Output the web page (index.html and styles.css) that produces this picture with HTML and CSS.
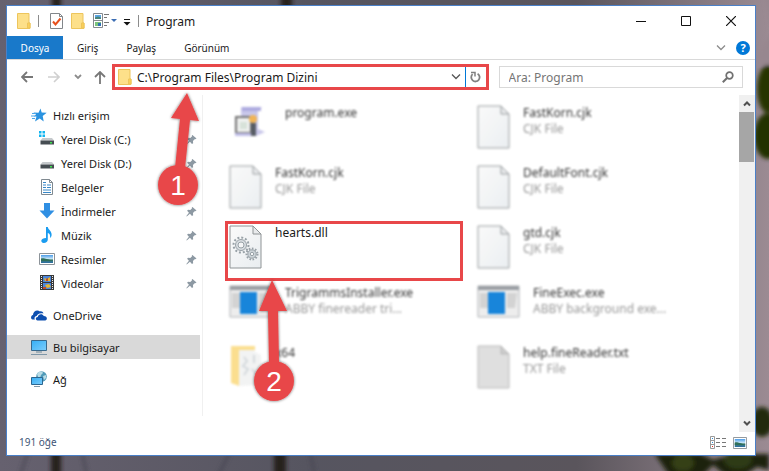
FILE: index.html
```html
<!DOCTYPE html>
<html lang="tr">
<head>
    <meta charset="UTF-8">
    <meta name="viewport" content="width=device-width, initial-scale=1.0">
    <title>Program</title>
    <link rel="stylesheet" href="styles.css">
</head>
<body>

    <!-- Shared icons -->
    <svg class="sprite" aria-hidden="true">
        <defs>
            <linearGradient id="paper" x1="0" y1="0" x2="1" y2="1">
                <stop offset="0" stop-color="#fafafa"/>
                <stop offset="1" stop-color="#e9edf0"/>
            </linearGradient>
            <linearGradient id="screen" x1="0" y1="0" x2="1" y2="1">
                <stop offset="0" stop-color="#35aef5"/>
                <stop offset="1" stop-color="#7ccdfb"/>
            </linearGradient>
            <linearGradient id="sky" x1="0" y1="0" x2="0" y2="1">
                <stop offset="0" stop-color="#4a9be8"/>
                <stop offset="0.5" stop-color="#d2ecfa"/>
                <stop offset="0.6" stop-color="#3f7d6b"/>
                <stop offset="1" stop-color="#2c6fa8"/>
            </linearGradient>
            <filter id="soft"><feGaussianBlur stdDeviation="2"/></filter>
            <filter id="shadow" x="-30%" y="-30%" width="160%" height="160%"><feDropShadow dx="0" dy="0" stdDeviation="1.5" flood-color="#000" flood-opacity="0.6"/></filter>
        </defs>
        <symbol id="i-folder" viewBox="0 0 14 16">
            <path d="M.5.5h11.500v9.500h1v5.500H.5z" fill="#fde08a" stroke="#edc55c"/>
            <path d="M10.500 15V10h2.500v5z" fill="#fbd058" stroke="#edc55c"/>
        </symbol>
        <symbol id="i-pin" viewBox="0 0 12 12">
            <path d="M7 1l4.500 4-1.500.8-.6-.2-1.800 2 .2 2.400-1.300.8-2.200-2.300L.8 11.500.4 11 3.200 7.400 1.200 5.300l1-1.200 2.500.2 1.900-1.800-.3-.8z" fill="#8d99a3"/>
        </symbol>
        <symbol id="i-page" viewBox="0 0 33 44">
            <path d="M1 1h23l8 8v34H1z" fill="url(#paper)" stroke="#8f9496"/>
            <path d="M24 1v8h8z" fill="#e8eaec" stroke="#8f9496"/>
        </symbol>
        <symbol id="i-txt" viewBox="0 0 33 44">
            <path d="M1 1h23l8 8v34H1z" fill="#dcdcdc" stroke="#b4b4b4"/>
            <path d="M24 1v8h8z" fill="#c8c8c8" stroke="#b0b0b0"/>
        </symbol>
        <symbol id="i-app" viewBox="0 0 43 33">
            <path d="M1 1h41v31H1z" fill="#ececec" stroke="#a8acb0"/>
            <path d="M1 1h41v4H1z" fill="#8f9499"/>
            <path d="M3 8h8v15H3zM30 8h10l-2 15h-8z" fill="#cfcfcf"/>
            <path d="M11 7h17v22H11z" fill="#0078d7"/>
        </symbol>
        <symbol id="i-photo" viewBox="0 0 16 12">
            <path d="M.5.5h15v11H.5z" fill="#fff" stroke="#8c9399"/>
            <path d="M2 2h12v8H2z" fill="url(#sky)"/>
            <path d="M2 5.500c3-1 5 .5 12 2V8H2z" fill="#2f6f5a"/>
        </symbol>
    </svg>

    <svg class="wallpaper" viewBox="0 0 769 471" preserveAspectRatio="none" aria-hidden="true">
        <g filter="url(#soft)">
            <path d="M52-5h9v20h-9zM281-5h11v20h-11z" fill="#25221f"/>
            <path d="M51 452h10v24H51zM274 452h12v24h-12z" fill="#25221f"/>
            <path d="M28 452l-8 24M82 452l5 24M310 452l5 24M230 452l-12 24" stroke="#454350" stroke-width="2"/>
            <path d="M754 60c8 6 12 4 18 2V-5h-8c5 16 4 26 8 36z" fill="#97878f"/>
            <path d="M757 88c4 12 10 18 18 20V80z" fill="#2c3a0d"/>
            <ellipse cx="768" cy="89" rx="11" ry="24" fill="#263406"/>
            <ellipse cx="768" cy="136" rx="14" ry="23" fill="#223004"/>
            <ellipse cx="762" cy="422" rx="11" ry="15" fill="#202a0a"/>
            <path d="M655 454h46l12 6 22-6h34v16l-12-3-12 8h-20l-12-10-10 10h-34z" fill="#1d2409"/>
            <ellipse cx="738" cy="460" rx="14" ry="9" fill="#2e3a12"/>
            <ellipse cx="683" cy="463" rx="11" ry="8" fill="#344014"/>
        </g>
    </svg>

    <div class="window">

        <header class="titlebar">
            <svg class="icon-folder" aria-hidden="true"><use href="#i-folder"/></svg>
            <span class="separator"></span>
            <button class="quick" aria-label="Özellikler">
                <svg width="13" height="16" viewBox="0 0 13 16"><path d="M.5.5h9l3 3v12H.5z" fill="#fff" stroke="#82868a"/><path d="M9.500.5v3h3" fill="none" stroke="#82868a"/><path d="M3 8.500l2.500 3 5-6" fill="none" stroke="#e8501c" stroke-width="2"/></svg>
            </button>
            <button class="quick" aria-label="Yeni klasör">
                <svg class="icon-folder"><use href="#i-folder"/></svg>
            </button>
            <button class="quick" aria-label="Görünüm seçenekleri">
                <svg width="24" height="16" viewBox="0 0 24 16"><path d="M.5.500h9v14h-9zM.5 7.500h9" fill="#fff" stroke="#84898e"/><path d="M2 2h6v4H2z" fill="#5aa5e2"/><path d="M2 4.500l3-1 3 1V6H2z" fill="#4a8579"/><path d="M2 9h6v4H2z" fill="#7cc47c"/><path d="M5 10h3v3H5z" fill="#3172b5"/><path d="M11 1.500h5M11 4.500h3M11 9.500h5M11 12.500h3" stroke="#777"/><path d="M18 6h6l-3 3z" fill="#3c6eb4"/></svg>
            </button>
            <button class="quick quick-more" aria-label="Özelleştir">
                <svg width="8" height="8" viewBox="0 0 8 8"><path d="M1 1.500h6" stroke="#111"/><path d="M.5 4h7L4 7.500z" fill="#111"/></svg>
            </button>
            <span class="separator"></span>
            <h1 class="title">Program</h1>
            <div class="window-controls">
                <button aria-label="Simge durumuna küçült"><svg width="10" height="10"><path d="M0 5.500h10" stroke="#111"/></svg></button>
                <button aria-label="Ekranı kapla"><svg width="10" height="10"><path d="M.5.500h9v9h-9z" fill="none" stroke="#111"/></svg></button>
                <button aria-label="Kapat"><svg width="10" height="10"><path d="M0 0l10 10M10 0L0 10" stroke="#111" stroke-width="1.200"/></svg></button>
            </div>
        </header>

        <nav class="ribbon">
            <button class="tab tab-file">Dosya</button>
            <button class="tab">Giriş</button>
            <button class="tab">Paylaş</button>
            <button class="tab">Görünüm</button>
            <div class="ribbon-end">
                <button aria-label="Şeridi genişlet"><svg width="10" height="6"><path d="M1 .5l4 4 4-4" fill="none" stroke="#8c8c8c" stroke-width="1.300"/></svg></button>
                <button class="help" aria-label="Yardım">?</button>
            </div>
        </nav>

        <div class="toolbar">
            <div class="nav-buttons">
                <button aria-label="Geri"><svg width="12" height="12" viewBox="0 0 12 12"><path d="M6 1L1 6l5 5M1 6h11" fill="none" stroke="#777" stroke-width="1.800"/></svg></button>
                <button aria-label="İleri"><svg width="12" height="12" viewBox="0 0 12 12"><path d="M6 1l5 5-5 5M11 6H0" fill="none" stroke="#d0d0d0" stroke-width="1.600"/></svg></button>
                <button class="narrow" aria-label="Son konumlar"><svg width="8" height="6"><path d="M1 1l3 3 3-3" fill="none" stroke="#8c8c8c" stroke-width="1.800"/></svg></button>
                <button class="narrow" aria-label="Yukarı"><svg width="12" height="13" viewBox="0 0 12 13"><path d="M1 6l5-5 5 5M6 1v12" fill="none" stroke="#777" stroke-width="1.800"/></svg></button>
            </div>
            <div class="address">
                <svg class="icon-folder" aria-hidden="true"><use href="#i-folder"/></svg>
                <input type="text" value="C:\Program Files\Program Dizini" aria-label="Adres">
                <button aria-label="Önceki konumlar"><svg width="10" height="6"><path d="M1 .5l4 4 4-4" fill="none" stroke="#555" stroke-width="1.300"/></svg></button>
                <button class="refresh" aria-label="Yenile"><svg width="11" height="12" viewBox="0 0 11 12"><path d="M2.600 3.200A4.200 4.200 0 1 0 7.600 2.700" fill="none" stroke="#808080" stroke-width="1.800"/><path d="M1 1.500h4v4" fill="none" stroke="#808080" stroke-width="1.500"/></svg></button>
            </div>
            <div class="search">
                <input type="search" placeholder="Ara: Program" aria-label="Ara">
                <svg width="12" height="12" viewBox="0 0 12 12" aria-hidden="true"><circle cx="7.500" cy="4.500" r="3.300" fill="none" stroke="#707070" stroke-width="1.700"/><path d="M5 7L.8 11.200" stroke="#707070" stroke-width="2"/></svg>
            </div>
        </div>

        <div class="content">

            <aside class="sidebar">
                <section class="group">
                    <a class="place" href="#">
                        <svg viewBox="0 0 16 16"><path d="M9.500 1.500l1.200 4 5 .2-4 3.300 1 5.500-4-3-4.700 3 1.500-5H3L5 7.500 2.500 5.500l5 .2z" fill="#2b93e0"/><path d="M1 6.500h4M0 9h4M1 11.500h3" stroke="#4aa6ea"/></svg>
                        Hızlı erişim
                    </a>
                    <a class="place child" href="#">
                        <svg viewBox="0 0 16 16"><path d="M0 0h2.500v2.500H0zM3.500 0H6v2.500H3.500zM0 3.500h2.500V6H0zM3.500 3.500H6V6H3.500z" fill="#12b5f0"/><path d="M3.500 7H13l2 2.500H1.500z" fill="#c5c9cc"/><path d="M1.500 9.500H15v4H1.500z" fill="#464d52"/><path d="M11 11h2v1.500h-2z" fill="#3de04f"/></svg>
                        Yerel Disk (C:)<svg class="pin"><use href="#i-pin"/></svg>
                    </a>
                    <a class="place child" href="#">
                        <svg viewBox="0 0 16 16"><path d="M3.500 7H13l2 2.500H1.500z" fill="#c5c9cc"/><path d="M1.500 9.500H15v4H1.500z" fill="#464d52"/><path d="M11 11h2v1.500h-2z" fill="#3de04f"/></svg>
                        Yerel Disk (D:)<svg class="pin"><use href="#i-pin"/></svg>
                    </a>
                    <a class="place child" href="#">
                        <svg viewBox="0 0 16 16"><path d="M2.500.5h8l3 3v12h-11z" fill="#fff" stroke="#7f8990"/><path d="M10.500.5v3h3" fill="none" stroke="#7f8990"/><path d="M4 3.500h3M4 6h3M8 6h4M4 8.500h3M8 8.500h4M4 11h8M4 13.500h8" stroke="#3787c7"/></svg>
                        Belgeler
                    </a>
                    <a class="place child" href="#">
                        <svg viewBox="0 0 16 16"><path d="M5 0h6v7.500h4.500L8 15.500.5 7.500H5z" fill="#2f8fe3"/></svg>
                        İndirmeler<svg class="pin"><use href="#i-pin"/></svg>
                    </a>
                    <a class="place child" href="#">
                        <svg viewBox="0 0 16 16"><path d="M7 0h1.800c.3 3 4.700 4 3.700 9-.4 1-1 1.500-1.500 2 .6-3-.5-4.500-2.200-5v6.500C8.800 14.500 7 16 4.800 16 1 15.500 1.500 11 7 11z" fill="#1a9cf0"/></svg>
                        Müzik<svg class="pin"><use href="#i-pin"/></svg>
                    </a>
                    <a class="place child" href="#">
                        <svg viewBox="0 0 16 12"><use href="#i-photo"/></svg>
                        Resimler<svg class="pin"><use href="#i-pin"/></svg>
                    </a>
                    <a class="place child" href="#">
                        <svg viewBox="0 0 16 16"><path d="M1 0h14v15H1z" fill="#393939"/><path d="M4 1h8v6H4zM4 8h8v6H4z" fill="#4b87dd"/><path d="M5 3l3 1 3-2v4H6zM6 10l4-1 2 3-4 1z" fill="#e5b52e"/><path d="M7 4l2-1v3H7zM4 12h3v2H4z" fill="#c24b2a"/><path d="M2.500 1v14M13.500 1v14" stroke="#eee" stroke-dasharray="1 1"/></svg>
                        Videolar<svg class="pin"><use href="#i-pin"/></svg>
                    </a>
                </section>
                <section class="group">
                    <a class="place" href="#">
                        <svg viewBox="0 0 16 16"><path d="M1.500 12.500C-.5 12-.5 8.500 2 8 2 4.500 6 2 9 4.500c1-.5 3 0 3.500 2C8 5.500 6 8 5.700 9 3.500 9 3 11.500 4 12.500z" fill="#0d4fb0"/><path d="M6.500 13.500c-2.500-.5-2-3.500.2-3.500C7 7 11.500 6 12.700 9c3.800 0 4 4 1.500 4.500z" fill="#0d4fb0"/></svg>
                        OneDrive
                    </a>
                </section>
                <section class="group">
                    <a class="place selected" href="#">
                        <svg viewBox="0 0 16 16"><path d="M.5 1.500h15v10H.5z" fill="url(#screen)" stroke="#38698d"/><path d="M5 13h6" stroke="#6f8797"/><path d="M0 15.500h16" stroke="#7f97a8"/></svg>
                        Bu bilgisayar
                    </a>
                </section>
                <section class="group">
                    <a class="place" href="#">
                        <svg viewBox="0 0 16 16"><circle cx="10.500" cy="5.500" r="5.300" fill="#4f9ab8"/><path d="M6 3c2-3 5-3 6-1l-2 2-1 3-2-1zM12 5l3-1v3l-2 2z" fill="#b9dce6"/><path d="M.5 6.500h11v7H.5z" fill="url(#screen)" stroke="#2c6690"/><path d="M3 15.500h6" stroke="#7f97a8"/></svg>
                        Ağ
                    </a>
                </section>
            </aside>

            <main class="files">
                <div class="file blurred">
                    <svg class="wide" viewBox="0 0 43 33"><path d="M12 2h21l-4 4v18l7 3-9 4H12z" fill="#c3c1e8"/><path d="M13 2h19v4H13z" fill="#a5a2dc"/><path d="M7 12h15v16H7z" fill="#eef0ee" stroke="#666" stroke-width="2"/><path d="M6 28h16v3H6z" fill="#b9b7e6"/><path d="M11 17h7v7h-7z" fill="#d3dfd5"/><circle cx="24" cy="14" r="4" fill="#f0ad45"/><path d="M22 18h5v13h-5z" fill="#454b55"/></svg>
                    <div class="file-text"><span>program.exe</span></div>
                </div>
                <div class="file blurred">
                    <svg viewBox="0 0 33 44"><use href="#i-page"/></svg>
                    <div class="file-text"><span>FastKorn.cjk</span><small>CJK File</small></div>
                </div>
                <div class="file blurred">
                    <svg viewBox="0 0 33 44"><use href="#i-page"/></svg>
                    <div class="file-text"><span>FastKorn.cjk</span><small>CJK File</small></div>
                </div>
                <div class="file blurred">
                    <svg viewBox="0 0 33 44"><use href="#i-page"/></svg>
                    <div class="file-text"><span>DefaultFont.cjk</span><small>CJK File</small></div>
                </div>
                <div class="file marked">
                    <svg viewBox="0 0 33 44">
                        <use href="#i-page"/>
                        <g fill="none" stroke="#98a1a7">
                            <circle cx="12" cy="20" r="7.500" stroke-width="2" stroke-dasharray="2 1.930"/>
                            <circle cx="12" cy="20" r="5.500" fill="#d9dee2" stroke-width="1"/>
                            <circle cx="12" cy="20" r="3" fill="#f5f6f7"/>
                            <circle cx="23" cy="29" r="5.500" stroke-width="2" stroke-dasharray="1.600 1.540"/>
                            <circle cx="23" cy="29" r="4.200" fill="#cdd4d9"/>
                            <circle cx="23" cy="29" r="1.700" fill="#f5f6f7"/>
                        </g>
                    </svg>
                    <div class="file-text"><span>hearts.dll</span></div>
                </div>
                <div class="file blurred">
                    <svg viewBox="0 0 33 44"><use href="#i-page"/></svg>
                    <div class="file-text"><span>gtd.cjk</span><small>CJK File</small></div>
                </div>
                <div class="file blurred">
                    <svg class="wide" viewBox="0 0 43 33"><use href="#i-app"/></svg>
                    <div class="file-text"><span>TrigrammsInstaller.exe</span><small>ABBY finereader tri...</small></div>
                </div>
                <div class="file blurred">
                    <svg class="wide" viewBox="0 0 43 33"><use href="#i-app"/></svg>
                    <div class="file-text"><span>FineExec.exe</span><small>ABBY background exe...</small></div>
                </div>
                <div class="file blurred">
                    <svg viewBox="0 0 33 44"><path d="M2 1h24v6l6 3v30l-22 1z" fill="#f1f2f2"/><path d="M2 1h24v4H10v36l-8-3z" fill="#fbdb83"/><path d="M15 12l3 4-4 5 5 3-4 6M25 10v8M23 24l4 5" fill="none" stroke="#d0d6da" stroke-width="2"/></svg>
                    <div class="file-text"><span>x64</span></div>
                </div>
                <div class="file blurred">
                    <svg viewBox="0 0 33 44"><use href="#i-txt"/></svg>
                    <div class="file-text"><span>help.fineReader.txt</span><small>TXT File</small></div>
                </div>
            </main>

            <div class="scrollbar">
                <button aria-label="Yukarı kaydır"><svg width="8" height="7"><path d="M1 5.500l3-3 3 3" fill="none" stroke="#505050" stroke-width="2"/></svg></button>
                <div class="thumb"></div>
                <button aria-label="Aşağı kaydır"><svg width="8" height="7"><path d="M1 1.500l3 3 3-3" fill="none" stroke="#505050" stroke-width="2"/></svg></button>
            </div>
        </div>

        <footer class="statusbar">
            <span>191 öğe</span>
            <div class="view-buttons">
                <button aria-label="Ayrıntılar"><svg width="16" height="13"><path d="M.5.500h4v12h-4zM.5 4.500h4M.5 8.500h4" fill="#fff" stroke="#999"/><path d="M2 2h1v1H2zM2 6h1v1H2z" fill="#2d8ed8"/><path d="M2 10h1v1H2z" fill="#e02f20"/><path d="M6 2.500h4M12 2.500h4M6 6.500h4M12 6.500h4M6 10.500h4M12 10.500h4" stroke="#777"/></svg></button>
                <button aria-label="Büyük simgeler"><svg width="14" height="12" viewBox="0 0 16 12" preserveAspectRatio="none"><use href="#i-photo"/></svg></button>
            </div>
        </footer>

        <!-- Numbered callouts -->
        <svg class="callout callout-1" width="60" height="120" viewBox="0 0 60 120" aria-hidden="true">
            <g fill="#e84749" filter="url(#shadow)">
                <path d="M37 3l12 28-9-1-5 48h-10l5-49-9-1z"/>
                <circle cx="28" cy="95" r="20"/>
            </g>
            <text x="28" y="105" text-anchor="middle">1</text>
        </svg>
        <svg class="callout callout-2" width="60" height="130" viewBox="0 0 60 130" aria-hidden="true">
            <g fill="#e84749" filter="url(#shadow)">
                <path d="M28 3l15 31h-9l1 52H25l-1-52h-9z"/>
                <circle cx="30" cy="104" r="20"/>
            </g>
            <text x="30" y="114" text-anchor="middle">2</text>
        </svg>
    </div>

</body>
</html>
```
FILE: styles.css
```css
:root {
    --accent: #0078d7;
    --frame: #4a80c8;
    --mark: #e84749;
    --line: #d9d9d9;
    --text: #1a1a1a;
}

* {
    margin: 0;
    padding: 0;
    box-sizing: border-box;
}

body {
    display: flex;
    min-height: 100vh;
    padding: 5px 13px 15px 6px;
    background: linear-gradient(90deg, #66616f 0%, #565560 40%, #5a555c 75%, #9b8b93 100%);
    color: var(--text);
    font-family: "Noto Sans", "Open Sans", sans-serif;
    font-size: 12px;
    position: relative;
}

button {
    display: flex;
    align-items: center;
    justify-content: center;
    border: none;
    background: none;
    color: inherit;
    font: inherit;
}

input {
    flex: 1;
    min-width: 0;
    border: none;
    outline: none;
    background: none;
    color: inherit;
    font: inherit;
}

svg {
    display: block;
    flex-shrink: 0;
}

.sprite {
    position: absolute;
    width: 0;
    height: 0;
}

.wallpaper {
    position: absolute;
    top: 0;
    left: 0;
    width: 100%;
    height: 100%;
}

.window {
    position: relative;
    flex: 1;
    display: flex;
    flex-direction: column;
    min-width: 0;
    background: #fff;
    border: 1px solid var(--frame);
}

.icon-folder {
    width: 14px;
    height: 16px;
}

/* Title bar */
.titlebar {
    display: flex;
    align-items: center;
    height: 30px;
    padding-left: 10px;
}

.separator {
    width: 1px;
    height: 12px;
    margin: 0 7px;
    background: #8c8c8c;
}

.quick {
    margin: 0 4px;
}

.quick-more {
    margin: 2px 0 0 2px;
}

.title {
    font-size: 12px;
    font-weight: 400;
}

.window-controls {
    display: flex;
    margin-left: auto;
    padding-right: 2px;
}

.window-controls button {
    width: 45px;
    height: 29px;
}

/* Ribbon tabs */
.ribbon {
    display: flex;
    height: 24px;
    border-bottom: 1px solid var(--line);
}

.tab {
    padding: 0 14px;
    font-size: 10px;
}

.tab-file {
    width: 56px;
    background: #1979ca;
    color: #fff;
}

.ribbon-end {
    display: flex;
    align-items: center;
    gap: 10px;
    margin-left: auto;
    padding-right: 5px;
}

.help {
    width: 14px;
    height: 14px;
    border-radius: 50%;
    background: var(--accent);
    color: #fff;
    font-size: 11px;
    font-weight: 700;
}

/* Address row */
.toolbar {
    display: flex;
    align-items: center;
    height: 34px;
    margin-bottom: 1px;
    padding: 0 12px 0 6px;
}

.nav-buttons {
    display: flex;
    width: 99px;
}

.nav-buttons button {
    width: 27px;
    height: 24px;
}

.nav-buttons .narrow {
    width: 22px;
}

.address {
    display: flex;
    align-items: center;
    flex: 376 1 376px;
    height: 26px;
    padding-left: 3px;
    border: 3px solid var(--mark);
}

.address input {
    margin-left: 5px;
}

.address button {
    width: 18px;
    height: 20px;
}

.address .refresh {
    width: 21px;
    border-left: 1px solid var(--accent);
}

.search {
    display: flex;
    align-items: center;
    flex: 244 1 244px;
    height: 22px;
    margin-left: 10px;
    padding: 0 8px 0 9px;
    border: 1px solid var(--line);
}

.search input::placeholder {
    color: #767676;
    opacity: 1;
}

/* Sidebar and files */
.content {
    flex: 1;
    display: flex;
}

.sidebar {
    display: flex;
    flex-direction: column;
    gap: 8px;
    width: 196px;
    margin-bottom: 16px;
    padding: 8px 2px 0 0;
    border-right: 1px solid #f0f0f0;
    font-size: 11px;
}

.place {
    display: flex;
    align-items: center;
    gap: 6px;
    height: 24px;
    padding-left: 24px;
    color: inherit;
    text-decoration: none;
}

.place svg {
    width: 16px;
    height: 16px;
}

.child {
    padding-left: 32px;
}

.place .pin {
    width: 11px;
    height: 11px;
    margin-left: auto;
    margin-right: 3px;
}

.selected {
    background: #d9d9d9;
}

.files {
    flex: 1;
    display: grid;
    grid-template-columns: repeat(2, 238px);
    grid-auto-rows: 60px;
    column-gap: 10px;
    align-content: start;
    padding: 6px 0 0 22px;
}

.file {
    display: flex;
    align-items: flex-start;
    gap: 13px;
    padding: 4px;
}

.file svg {
    width: 33px;
    height: 44px;
}

.file .wide {
    width: 43px;
    height: 33px;
}

.file-text {
    display: flex;
    flex-direction: column;
    line-height: 16px;
}

.file-text small {
    color: #8c8c8c;
    font-size: 12px;
}

.blurred {
    filter: blur(1px);
    opacity: 0.9;
}

.marked {
    padding: 1px;
    border: 3px solid var(--mark);
}

/* Scrollbar */
.scrollbar {
    display: flex;
    flex-direction: column;
    width: 16px;
    background: #f0f0f0;
}

.scrollbar button {
    height: 17px;
}

.scrollbar button:last-child {
    margin-top: auto;
}

.thumb {
    height: 50px;
    margin-right: 1px;
    background: #a6a6a6;
}

/* Status bar */
.statusbar {
    display: flex;
    align-items: flex-start;
    justify-content: space-between;
    height: 23px;
    padding: 3px 8px 0 12px;
    color: #3d5475;
    font-size: 10px;
}

.view-buttons {
    display: flex;
    align-items: center;
    gap: 7px;
    padding-top: 1px;
}

/* Callouts over the window */
.callout {
    position: absolute;
    pointer-events: none;
}

.callout-1 {
    left: 143px;
    top: 84px;
}

.callout-2 {
    left: 237px;
    top: 271px;
}

.callout text {
    fill: #fff;
    font-family: "Liberation Sans", sans-serif;
    font-size: 28px;
}
```
